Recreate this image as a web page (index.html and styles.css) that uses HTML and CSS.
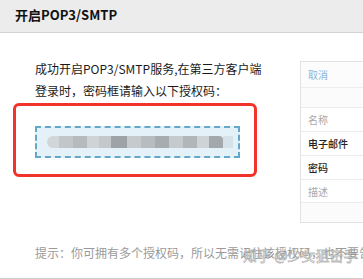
FILE: index.html
```html
<!DOCTYPE html>
<html lang="zh-CN">
<head>
  <meta charset="UTF-8" />
  <meta name="viewport" content="width=device-width,initial-scale=1" />
  <title>开启POP3/SMTP</title>
  <link rel="stylesheet" href="styles.css">
</head>
<body>
  <div class="dialog">
    <div class="dialog-header">开启POP3/SMTP</div>
    <div class="dialog-body">
      <div class="main">
        <p class="intro">成功开启POP3/SMTP服务,在第三方客户端<br>登录时，密码框请输入以下授权码：</p>
        <div class="mark">
          <div class="code-box">
            <div class="mosaic">
              <span class="m m1"></span><span class="m m2"></span><span class="m m3"></span>
              <span class="m m4"></span><span class="m m5"></span><span class="m m6"></span>
              <span class="m m7"></span><span class="m m8"></span><span class="m m9"></span>
              <span class="m m10"></span><span class="m m11"></span><span class="m m12"></span>
              <span class="m m13"></span><span class="m m14"></span>
            </div>
          </div>
        </div>
      </div>
      <div class="phone">
        <div class="phone-head">取消</div>
        <div class="phone-gap"></div>
        <div class="phone-row muted">名称</div>
        <div class="phone-row">电子邮件</div>
        <div class="phone-row">密码</div>
        <div class="phone-row muted">描述</div>
      </div>
    </div>
    <p class="hint">提示：你可拥有多个授权码，所以无需记住该授权码，也不要告诉别人</p>
    <span class="watermark">知乎 @少女狙击手</span>
  </div>
</body>
</html>
```

FILE: styles.css
```css
/* Общие */
body { margin: 0; background: #fff; font-family: "Noto Sans CJK SC", "Noto Sans", sans-serif; color: #222; }
.dialog { position: relative; width: 363px; height: 279px; overflow: hidden; border-bottom: 1px solid #cfcfcf; box-sizing: border-box; }
.dialog-header { height: 32px; line-height: 30px; padding-left: 15px; background: #ececec; border-bottom: 1px solid #d2d2d2; font-size: 13px; font-weight: bold; color: #111; }

/* Тело */
.dialog-body { display: flex; }
.main { flex: 0 0 300px; }
.intro { margin: 25px 0 0 35px; font-size: 12px; line-height: 22px; color: #1a1a1a; }
.mark { margin: 1px 0 0 13px; width: 219px; height: 48px; border: 3px solid #f2332a; border-radius: 6px; padding: 20px 0 0 19px; }
.code-box { width: 201px; height: 28px; border: 2px dashed #63a7c9; background: #e5f1f8; display: flex; align-items: center; }
.mosaic { display: flex; margin-left: 10px; height: 12px; }
.m { display: block; height: 12px; width: 14px; }
.m1  { background: #d3d6d9; border-radius: 6px 0 0 6px; width: 12px; }
.m2  { background: #c2c6c9; }
.m3  { background: #b6babd; }
.m4  { background: #d0d3d6; width: 12px; }
.m5  { background: #c4c8cb; width: 12px; }
.m6  { background: #9ea3a7; width: 16px; }
.m7  { background: #c7cacd; }
.m8  { background: #b8bcbf; }
.m9  { background: #a7acb0; }
.m10 { background: #c6cacd; }
.m11 { background: #b1b6b9; }
.m12 { background: #cfd3d6; width: 12px; }
.m13 { background: #a3a8ac; border-radius: 0 4px 0 0; }
.m14 { background: #d6e2ea; width: 10px; }

/* Правая панель */
.phone { flex: 1; margin-top: 28px; height: 162px; border: 1px solid #e2e2e2; border-right: none; background: #fbfbfb; box-sizing: border-box; font-size: 10px; }
.phone-head { height: 26px; line-height: 26px; padding-left: 7px; color: #8cb6da; background: #fcfcfc; border-bottom: 1px solid #ececec; box-sizing: border-box; }
.phone-gap { height: 19px; }
.phone-row { height: 24px; line-height: 23px; padding-left: 7px; background: #fff; border-top: 1px solid #ececec; box-sizing: border-box; color: #222; font-weight: 500; }
.phone-row.muted { color: #a8a8a8; font-weight: normal; }
.phone-row:last-child { border-bottom: 1px solid #ececec; }

/* Подсказка */
.hint { margin: 23px 0 0 35px; font-size: 12px; line-height: 14px; color: #9a9a9a; white-space: nowrap; }
.watermark { position: absolute; left: 243px; top: 246px; font-size: 14px; line-height: 18px; white-space: nowrap; color: rgba(255,255,255,0.7); -webkit-text-stroke: 0.8px rgba(130,130,130,0.55); }
```
